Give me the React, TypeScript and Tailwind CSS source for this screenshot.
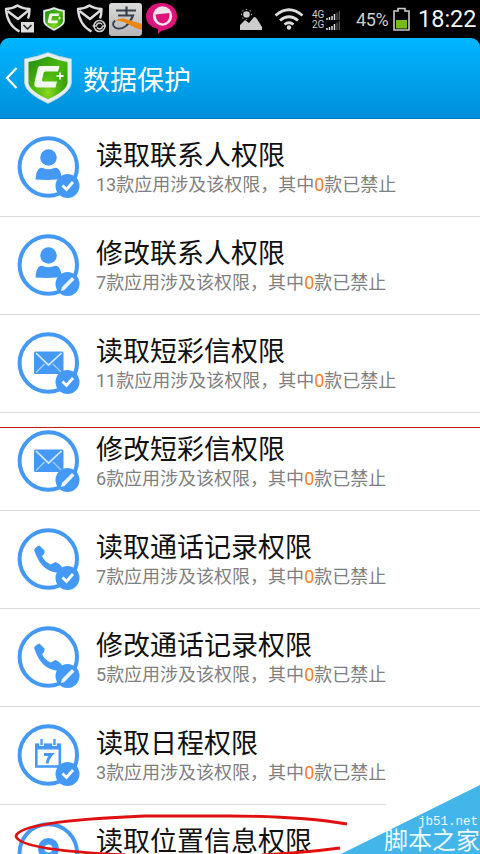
type IconKind = "contact" | "message" | "call" | "calendar" | "location";

type Permission = {
  title: string;
  count?: number;
  icon: IconKind;
  action: "read" | "edit";
};

const permissions: Permission[] = [
  { title: "读取联系人权限", count: 13, icon: "contact", action: "read" },
  { title: "修改联系人权限", count: 7, icon: "contact", action: "edit" },
  { title: "读取短彩信权限", count: 11, icon: "message", action: "read" },
  { title: "修改短彩信权限", count: 6, icon: "message", action: "edit" },
  { title: "读取通话记录权限", count: 7, icon: "call", action: "read" },
  { title: "修改通话记录权限", count: 5, icon: "call", action: "edit" },
  { title: "读取日程权限", count: 3, icon: "calendar", action: "read" },
  { title: "读取位置信息权限", icon: "location", action: "read" },
];

function Glyph({ kind }: { kind: IconKind }) {
  switch (kind) {
    case "contact":
      return (
        <g fill="#4499f7">
          <circle cx="32.5" cy="22.5" r="8.3" />
          <path d="M19.500 44.500q.5-9.500 4.500-11.500 2-.8 3.500.3 5 2 10 0 2-1 3.500-.3 4 2 4.500 9.500l-5 2q-10 .8-21 0Z" />
        </g>
      );
    case "message":
      return (
        <g>
          <rect x="18" y="20.500" width="29.500" height="22.500" rx="1.500" fill="#4499f7" />
          <path d="M20 22 32.500 34 45.500 22" fill="none" stroke="#d9ecff" strokeWidth="1.700" />
          <path d="m20 41.500 8.500-8.500M45.500 41.500 37 33" stroke="#a9d0fc" strokeWidth="1.200" />
        </g>
      );
    case "call":
      return (
        <path
          d="M18 23q1.500-3.500 5.500-4.500l5 5q.5 3.500-2.500 5.500 2 5 8.500 8.500l5-2.500q4 1.500 6.500 5l-2 5q-6 1.500-13.500-3T18 23Z"
          fill="#4499f7"
        />
      );
    case "calendar":
      return (
        <g>
          <path d="M20.300 22h23.500v21.500H20.300z" fill="none" stroke="#4499f7" strokeWidth="2.600" />
          <path d="M19 20.500h26v6H19z" fill="#4499f7" />
          <path d="M25.500 17v6M38.500 17v6" stroke="#fff" strokeWidth="4.500" />
          <path d="M25.500 16v6M38.500 16v6" stroke="#4499f7" strokeWidth="2.300" />
          <path d="M28 31.500h7.500Q32 35 31 40.500" fill="none" stroke="#4499f7" strokeWidth="2.800" />
        </g>
      );
    case "location":
      return (
        <path
          fillRule="evenodd"
          d="M32.500 17a10.500 10.500 0 0 1 10.500 10.500c0 8-10.500 18-10.500 18S22 35.500 22 27.500A10.500 10.500 0 0 1 32.500 17Zm0 6.500a4 4 0 1 0 0 8 4 4 0 0 0 0-8Z"
          fill="#4499f7"
        />
      );
  }
}

function PermissionIcon({ icon, action }: Pick<Permission, "icon" | "action">) {
  return (
    <svg className="h-16 w-16 shrink-0" viewBox="0 0 64 64">
      <circle cx="32.300" cy="32" r="28.700" fill="#fff" stroke="#4499f7" strokeWidth="4" />
      <Glyph kind={icon} />
      <circle cx="51.500" cy="51" r="12" fill="#4499f7" />
      {action === "read" ? (
        <path d="m46.500 50.500 4 4 6.500-7.500" fill="none" stroke="#fff" strokeWidth="2.800" />
      ) : (
        <path d="m45 58 1-4L56 44l2.500 2.500L48.500 57Z" fill="#eaf4ff" />
      )}
    </svg>
  );
}

function PermissionRow({ title, count, icon, action }: Permission) {
  return (
    <li className="flex h-[98px] shrink-0 items-start border-b border-[#d8d8d8] pl-4 pt-4">
      <PermissionIcon icon={icon} action={action} />
      <div className="pl-4 whitespace-nowrap">
        <h2 className="mt-[5px] text-[27px] leading-[33px] text-[#111]">{title}</h2>
        {count !== undefined && (
          <p className="-mt-px text-[18px] leading-[25px] text-[#808080]">
            {count}款应用涉及该权限，其中<span className="text-[#ff8020]">0</span>款已禁止
          </p>
        )}
      </div>
    </li>
  );
}

function ShieldLogo({ className }: { className: string }) {
  return (
    <svg className={className} viewBox="0 0 48 52">
      <defs>
        <linearGradient id="shield" x1="0" y1="0" x2="1" y2="1">
          <stop offset="0" stopColor="#238c0c" />
          <stop offset=".5" stopColor="#4bb80d" />
          <stop offset="1" stopColor="#278e0b" />
        </linearGradient>
        <radialGradient id="shine" cx=".5" cy=".85" r=".5">
          <stop offset="0" stopColor="#8fdc22" />
          <stop offset="1" stopColor="#5fc70d" stopOpacity="0" />
        </radialGradient>
      </defs>
      <path d="M24 .5Q35 5 47.500 7v24q-1 10-23.500 20.500Q1.500 41 .5 31V7Q13 5 24 .5Z" fill="#e5eeee" stroke="#b9cbd1" strokeWidth=".7" />
      <path d="M24 4.500Q34 8.500 43.500 10v21q-1 8-19.500 16Q5.500 39 4.500 31V10Q14 8.500 24 4.500Z" fill="url(#shield)" />
      <path d="M24 4.500Q34 8.500 43.500 10v21q-1 8-19.500 16Q5.500 39 4.500 31V10Q14 8.500 24 4.500Z" fill="url(#shine)" />
      <path d="M16 14h19.500l-1.500 5.500H21.500q-1.500 0-2 2l-1.500 6q-.5 2 1.500 2H33l-1.500 6H14q-4.500 0-3.500-5l3-13q.5-3.500 2.500-3.500Z" fill="#f1f8ed" />
      <path d="M36 20.500v7M32.500 24h7" stroke="#f1f8ed" strokeWidth="1.800" />
    </svg>
  );
}

function GuardIcon({ badge }: { badge: "mail" | "sync" }) {
  return (
    <svg className="h-8 w-[31px]" viewBox="0 0 31 32">
      <g fill="none" stroke="#ddd" strokeWidth="2.400" strokeLinejoin="round">
        <path d="M16.500 30.500Q4 24 3 8q7-.5 11.500-3.500Q19 7.500 26.500 8q0 6-1.500 9.500" />
        <path d="m4.500 10 10.500 8L26 9" />
      </g>
      {badge === "mail" ? (
        <g>
          <path d="M17 19.500h14v12H17z" fill="#000" />
          <path d="M18 21H31v10.500H18z" fill="#ddd" />
          <path d="m20.500 24 4 4 4-4" fill="none" stroke="#222" strokeWidth="1.500" />
        </g>
      ) : (
        <g fill="none" stroke="#ccc" strokeWidth="1.600">
          <circle cx="24.500" cy="25" r="5.500" fill="#000" />
          <path d="M21.500 24.500a3 3 0 0 1 5.500-1M27.500 25.500a3 3 0 0 1-5.500 1M17.500 25h4.500M27 25h4" />
        </g>
      )}
    </svg>
  );
}

function SignalRow({ label }: { label: string }) {
  return (
    <div className="flex h-[10px] items-end">
      <span className="w-[14px] text-[10px] leading-[10px] text-[#ccc]">{label}</span>
      <svg className="h-[9px] w-[14px]" viewBox="0 0 14 9">
        <path d="M1 9V7M3.500 9V6M6 9V5M8.500 9V3" stroke="#ddd" strokeWidth="1.500" />
        <path d="M11 9V1.500M13.300 9V0" stroke="#555" strokeWidth="1.300" />
      </svg>
    </div>
  );
}

function StatusBar() {
  return (
    <div className="flex h-[38px] shrink-0 items-start bg-black">
      <div className="flex w-[239px] items-start pl-[3px] pt-[1px]">
        <GuardIcon badge="mail" />
        <div className="w-[41px] pl-[9px] pt-[6px]">
          <ShieldLogo className="h-6 w-[22px]" />
        </div>
        <GuardIcon badge="sync" />
        <svg className="ml-[3px] mt-[2px] h-[33px] w-[33px]" viewBox="0 0 33 33">
          <defs>
            <linearGradient id="tile" x1="0" y1="0" x2="0" y2="1">
              <stop offset="0" stopColor="#dadada" />
              <stop offset="1" stopColor="#b6b6b6" />
            </linearGradient>
          </defs>
          <rect width="33" height="33" rx="3" fill="url(#tile)" />
          <path d="M7 7.500h20M17.500 3.500v9M9 12.500h15q-2 6-7 10.500" fill="none" stroke="#36404c" strokeWidth="2.200" />
          <path d="M17 23q-6 4.500-11 1.500-4-3 0-7" fill="none" stroke="#36404c" strokeWidth="1.800" />
          <path d="M6 17.500q4-2.500 9-2 8 2.500 18 5.500v6q-7-1.500-14-6-6-3.500-13-3.500Z" fill="#ed8514" />
        </svg>
        <svg className="ml-1 mt-[2px] h-8 w-[31px]" viewBox="0 0 31 32">
          <path d="M15.500 0C25 0 31 5.500 31 13.500S25 26 18 27q-4 1-6 4v-5Q0 23 0 13.500C0 6 6 0 15.500 0Z" fill="#dc137b" />
          <circle cx="16.500" cy="13" r="9.700" fill="#efe4e9" />
          <path d="M9.500 11.500 23.500 10q.5 9.500-6.500 10.500-7-.5-7.500-9Z" fill="#dc137b" />
        </svg>
      </div>
      <svg className="mt-[9px] h-[21px] w-6" viewBox="0 0 24 21">
        <circle cx="7.500" cy="5.500" r="3.300" fill="#ccc" />
        <path d="M7.500 0v1M7.500 10v1M2 5.500h1M12 5.500h1M3.500 1.500l.8.800M11.500 1.500l-.8.800M3.500 9.500l.8-.8" stroke="#aaa" strokeWidth="1.300" />
        <path d="M1 21v-5l5-5 4 3 5-6q2 0 3 2l5 8v3Z" fill="#ccc" />
      </svg>
      <svg className="ml-[11px] mt-[8px] h-[22px] w-[30px]" viewBox="0 0 30 22">
        <g fill="none" stroke="#ddd" strokeWidth="2.800">
          <path d="M1.500 7.500Q15-4 28.500 7.500" />
          <path d="M6 12.500q9-7.500 18 0" />
          <path d="M10.500 16.500q4.500-3.500 9 0" />
        </g>
        <circle cx="15" cy="19.500" r="2.200" fill="#ddd" />
      </svg>
      <div className="ml-2 mt-[10px] w-7 font-['Roboto',sans-serif]">
        <SignalRow label="4G" />
        <SignalRow label="2G" />
      </div>
      <span className="ml-[16px] mt-[7px] w-[33px] text-[18px] leading-[25px] tracking-[-0.4px] text-[#ccc]">45%</span>
      <svg className="ml-[4px] mt-[7px] h-6 w-[17px]" viewBox="0 0 17 24">
        <path d="M5 1.500h7V4h4v19H1V4h4Z" fill="#000" stroke="#ccc" strokeWidth="1.600" />
        <path d="M3 13h11v8.500H3z" fill="#76ba1b" />
      </svg>
      <span className="ml-[8px] mt-[5px] text-[23.500px] leading-[29px] text-[#f4f4f4]">18:22</span>
    </div>
  );
}

function Header() {
  return (
    <div className="h-[81px] shrink-0 bg-black">
      <header className="flex h-full items-center rounded-t-[9px] border-b border-[#0878b8] bg-linear-to-b from-[#00b6ff] to-[#008fdb] pl-[5px]">
        <svg className="h-[22px] w-[13px]" viewBox="0 0 13 22">
          <path d="M11.500 1 2 11l9.500 10" fill="none" stroke="#fff" strokeWidth="2.200" />
        </svg>
        <ShieldLogo className="ml-[6px] h-[52px] w-[48px]" />
        <h1 className="ml-[11px] pt-[5px] text-[27px] leading-[38px] text-white">数据保护</h1>
      </header>
    </div>
  );
}

export default function App() {
  return (
    <div className="relative flex h-[854px] w-[480px] flex-col overflow-hidden bg-white font-['Roboto','Noto_Sans_CJK_SC',sans-serif]">
      <StatusBar />
      <Header />
      <ul className="flex flex-col">
        {permissions.map((permission) => (
          <PermissionRow key={permission.title} {...permission} />
        ))}
      </ul>

      <div className="absolute left-0 top-[427px] h-px w-full bg-[#c81818]" />

      {/* hand-drawn marker and corner stamp over the list */}
      <svg className="absolute bottom-0 left-0 h-[70px] w-[480px]" viewBox="0 784 480 70">
        <path d="M387 804 480 784v70H340l8-32Z" fill="#fff" />
        <path
          d="M347 824Q300 816 230 816h-85Q20 821 16 836q2 14 110 19M262 855q40-2 78-7"
          fill="none"
          stroke="#e01010"
          strokeWidth="2.800"
        />
        <path d="M480 785v69H341Z" fill="#43b5e9" />
      </svg>
      <div className="absolute bottom-0 right-0 flex flex-col items-end whitespace-nowrap text-[#eef8ff]">
        <span className="pr-[2px] font-['Liberation_Mono',monospace] text-[12.500px] leading-[14px]">jb51.net</span>
        <span className="text-[24px] leading-[25px]">脚本之家</span>
      </div>
    </div>
  );
}
